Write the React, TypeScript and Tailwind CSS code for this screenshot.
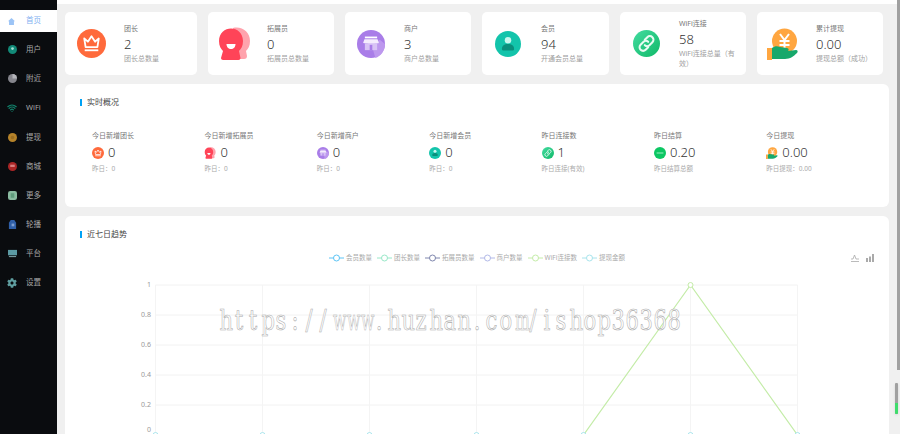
import React from 'react';
import { Wifi } from 'lucide-react';
import { FaCog } from 'react-icons/fa';

const Crown = ({ className }: { className: string }) => (
  <svg viewBox="0 0 32 32" className={className}>
    <circle cx="16" cy="16" r="16" fill="#ff6a3c" />
    <path d="M8 10.500l4 3.500 4-6 4 6 4-3.500-1.500 9.500h-13z" fill="none" stroke="#fff" strokeWidth="2" strokeLinejoin="round" />
    <rect x="8.500" y="22.500" width="15" height="2" fill="#fff" />
  </svg>
);

const Robot = ({ className }: { className: string }) => (
  <svg viewBox="0 0 34 34" className={className}>
    <path d="M16 1c9-2 17 4 17 13 0 5-2 8-4 10l1 5c0 2-1 3-3 3H16z" fill="#ffa3ad" />
    <path d="M2 14C2 6 8 1.500 14 1.500S26 6 26 14c0 5-2 8-4 10l1.500 7c0 1-1 2-2 2H6c-1 0-2-1-2-2l2-7c-2-2-4-5-4-10z" fill="#ff4458" />
    <path d="M9.500 17h9c0 3-2 5-4.500 5s-4.500-2-4.500-5z" fill="#fff" />
  </svg>
);

const Shop = ({ className }: { className: string }) => (
  <svg viewBox="0 0 32 32" className={className}>
    <circle cx="16" cy="16" r="16" fill="#a97de8" />
    <path d="M21 32l-4-14 9-7 6 5c0 8-5 14-11 16z" fill="#bd98ee" />
    <rect x="9" y="7.500" width="14" height="2" fill="#fff" />
    <path d="M8.500 10.500h15l1.500 4c0 1.500-17 1.500-18 0z" fill="#f4ecfd" />
    <rect x="9" y="15.500" width="14" height="7.500" fill="#d8c3f5" />
    <rect x="14.500" y="17" width="3" height="6" fill="#a97de8" />
  </svg>
);

const Member = ({ className }: { className: string }) => (
  <svg viewBox="0 0 32 32" className={className}>
    <circle cx="16" cy="16" r="16" fill="#13c4ab" />
    <circle cx="16" cy="11.500" r="4" fill="#c8f6ee" />
    <path d="M8.500 22c0-4 3-6 7.500-6s7.500 2 7.500 6c0 1.500-1 2-2 2h-11c-1 0-2-.500-2-2z" fill="#0a8f7c" />
  </svg>
);

const Chain = ({ className }: { className: string }) => (
  <svg viewBox="0 0 32 32" className={className}>
    <defs>
      <linearGradient id="chainFill" x1="0" y1="0" x2="1" y2="1">
        <stop offset="0" stopColor="#43dba0" />
        <stop offset="1" stopColor="#10b968" />
      </linearGradient>
    </defs>
    <circle cx="16" cy="16" r="16" fill="url(#chainFill)" />
    <g fill="none" stroke="#e8fbf2" strokeWidth="2.400" strokeLinecap="round">
      <path d="M14 11.500l3-3a4 4 0 0 1 6 6l-3.500 3.500a4 4 0 0 1-5.500 0" />
      <path d="M18 20.500l-3 3a4 4 0 0 1-6-6l3.500-3.500a4 4 0 0 1 5.500 0" />
    </g>
  </svg>
);

const Coin = ({ className }: { className: string }) => (
  <svg viewBox="0 0 32 32" className={className}>
    <circle cx="17.500" cy="13" r="12.500" fill="#ffa640" />
    <path d="M13 6l4.500 6 4.500-6M12.500 13h10M12.500 17h10M17.500 12v9" fill="none" stroke="#fff" strokeWidth="2" />
    <rect x="0" y="20" width="5" height="12" fill="#ffa640" />
    <path d="M5 20c3-2 5-2 8-1l7 1c2 .500 2 2 1 3l8-1c2 0 2 2 1 3-3 3-7 6-12 6H5z" fill="#17a86b" />
  </svg>
);

const Settle = ({ className }: { className: string }) => (
  <svg viewBox="0 0 32 32" className={className}>
    <circle cx="16" cy="16" r="16" fill="#0cc763" />
    <rect x="7" y="14.500" width="18" height="3" fill="#8fe8b8" />
  </svg>
);

const navItems = [
  {
    label: '用户',
    icon: (
      <svg viewBox="0 0 10 10" className="w-[9px] h-[9px]">
        <circle cx="5" cy="5" r="5" fill="#128a78" />
        <circle cx="5" cy="4" r="1.500" fill="#a6e0d4" />
      </svg>
    ),
  },
  {
    label: '附近',
    icon: (
      <svg viewBox="0 0 10 10" className="w-[9px] h-[9px]">
        <circle cx="5" cy="5" r="5" fill="#85858c" />
        <path d="M5 5V0a5 5 0 0 1 5 5z" fill="#b5b5ba" />
      </svg>
    ),
  },
  { label: 'WiFi', icon: <Wifi className="w-[10px] h-[10px] text-[#12806a]" strokeWidth={3} /> },
  {
    label: '提现',
    icon: (
      <svg viewBox="0 0 10 10" className="w-[9px] h-[9px]">
        <circle cx="5" cy="5" r="5" fill="#b5832a" />
        <circle cx="5" cy="5" r="2" fill="#9c6f22" />
      </svg>
    ),
  },
  {
    label: '商城',
    icon: (
      <svg viewBox="0 0 10 10" className="w-[9px] h-[9px]">
        <circle cx="5" cy="5" r="5" fill="#ab2626" />
        <rect x="2.500" y="3" width="5" height="2.500" fill="#d88080" />
      </svg>
    ),
  },
  {
    label: '更多',
    icon: (
      <svg viewBox="0 0 10 10" className="w-[9px] h-[9px]">
        <rect width="10" height="10" rx="2.500" fill="#8abba0" />
        <rect x="3" y="2.500" width="4" height="5" fill="#5f9c7c" />
      </svg>
    ),
  },
  {
    label: '轮播',
    icon: (
      <svg viewBox="0 0 10 10" className="w-[9px] h-[9px]">
        <path d="M1 3l2-3h4l2 3v7H1z" fill="#2f5fa8" />
        <rect x="4" y="4" width="3" height="3" fill="#7e9ed0" />
      </svg>
    ),
  },
  {
    label: '平台',
    icon: (
      <svg viewBox="0 0 10 10" className="w-[9px] h-[9px]">
        <rect y="1" width="10" height="6" fill="#5b9aa3" />
        <rect x="1" y="8" width="8" height="1" fill="#8fb8bd" />
      </svg>
    ),
  },
  { label: '设置', icon: <FaCog className="w-[10px] h-[10px] text-[#5f9ea0]" /> },
];

const cards = [
  { Icon: Crown, size: 'w-[29px] h-[29px]', width: 'w-[132px]', title: '团长', value: '2', sub: '团长总数量' },
  { Icon: Robot, size: 'w-[34px] h-[34px]', width: 'w-[126px]', title: '拓展员', value: '0', sub: '拓展员总数量' },
  { Icon: Shop, size: 'w-[28px] h-[28px]', width: 'w-[126px]', title: '商户', value: '3', sub: '商户总数量' },
  { Icon: Member, size: 'w-[26px] h-[26px]', width: 'w-[127px]', title: '会员', value: '94', sub: '开通会员总量' },
  { Icon: Chain, size: 'w-[27px] h-[27px]', width: 'w-[126px]', title: 'WiFi连接', value: '58', sub: 'WiFi连接总量（有效）' },
  { Icon: Coin, size: 'w-[32px] h-[32px]', width: 'w-[126px]', title: '累计提现', value: '0.00', sub: '提现总额（成功）' },
];

const stats = [
  { Icon: Crown, label: '今日新增团长', value: '0', sub: '昨日：0' },
  { Icon: Robot, label: '今日新增拓展员', value: '0', sub: '昨日：0' },
  { Icon: Shop, label: '今日新增商户', value: '0', sub: '昨日：0' },
  { Icon: Member, label: '今日新增会员', value: '0', sub: '昨日：0' },
  { Icon: Chain, label: '昨日连接数', value: '1', sub: '昨日连接(有效)' },
  { Icon: Settle, label: '昨日结算', value: '0.20', sub: '昨日结算总额' },
  { Icon: Coin, label: '今日提现', value: '0.00', sub: '昨日提现：0.00' },
];

const legend = [
  { label: '会员数量', color: '#5cc4f5' },
  { label: '团长数量', color: '#98e8c8' },
  { label: '拓展员数量', color: '#7e86ad' },
  { label: '商户数量', color: '#b2b9e8' },
  { label: 'WiFi连接数', color: '#c4eca8' },
  { label: '提现金额', color: '#a8e4ec' },
];

const gridX = [155.5, 262.5, 369.5, 476.5, 583.5, 690.5, 797.5];
const gridY = [
  { y: 285, label: '1' },
  { y: 315, label: '0.8' },
  { y: 345, label: '0.6' },
  { y: 375, label: '0.4' },
  { y: 405, label: '0.2' },
  { y: 430, label: '0' },
];

const watermark = 'https://www.huzhan.com/ishop36368'.split('');

const SectionTitle = ({ children }: { children: React.ReactNode }) => (
  <div className="flex items-center gap-[5px] text-[8px] leading-[10px] text-[#444]">
    <span className="w-[2px] h-[7px] bg-[#00a2f5]" />
    {children}
  </div>
);

const App = () => {
  return (
    <div className="relative flex w-[900px] h-[434px] overflow-hidden bg-[#f0f0f0] font-['Noto_Sans','Noto_Sans_CJK_SC',sans-serif]">
      <aside className="w-[57px] shrink-0 bg-[#0a0c0f] pt-[10px]">
        <div className="flex items-center h-[22px] bg-white pl-[8px] gap-[11px] text-[7.5px] text-[#7fb0f0]">
          <svg viewBox="0 0 10 10" className="w-[7px] h-[7px]">
            <path d="M5 0l5 4.500H8.500V10h-7V4.500H0z" fill="#9cc4f6" />
          </svg>
          首页
        </div>
        <div className="mt-[3px]">
          {navItems.map((item) => (
            <div key={item.label} className="flex items-center h-[29.2px] pl-[7px] text-[7.5px] text-[#a8a8a8]">
              <span className="flex items-center justify-center w-[10px] mr-[9px]">{item.icon}</span>
              {item.label}
            </div>
          ))}
        </div>
      </aside>

      <main className="flex-1 min-w-0">
        <div className="h-[4px] bg-white mr-[3px]" />
        <div className="pl-[8px] pt-[8px]">
          <div className="flex gap-[11px]">
            {cards.map((card) => (
              <div key={card.title} className={`${card.width} h-[63px] shrink-0 flex items-center rounded-[5px] bg-white`}>
                <div className="w-[52px] mr-[7px] shrink-0 flex items-center justify-center">
                  <card.Icon className={card.size} />
                </div>
                <div className="min-w-0 pr-[8px]">
                  <div className="text-[7px] leading-[10px] text-[#777]">{card.title}</div>
                  <div className="text-[13px] leading-[18px] my-[1px] font-light text-[#333]">{card.value}</div>
                  <div className="text-[7px] leading-[10px] text-[#a0a0a0]">{card.sub}</div>
                </div>
              </div>
            ))}
          </div>

          <section className="w-[824px] h-[123px] mt-[9px] rounded-[6px] bg-white pl-[15px] pt-[13px]">
            <SectionTitle>实时概况</SectionTitle>
            <div className="grid grid-cols-[repeat(7,112.4px)] mt-[24px] pl-[12px]">
              {stats.map((stat) => (
                <div key={stat.label}>
                  <div className="text-[7px] leading-[10px] text-[#777]">{stat.label}</div>
                  <div className="flex items-center h-[14px] mt-[5px] gap-[4px] text-[13px] font-light text-[#333]">
                    <stat.Icon className="w-[12px] h-[12px]" />
                    {stat.value}
                  </div>
                  <div className="text-[6.5px] leading-[9px] mt-[4px] text-[#aaa]">{stat.sub}</div>
                </div>
              ))}
            </div>
          </section>

          <section className="relative w-[824px] h-[240px] mt-[9px] rounded-[6px] bg-white pt-[13px]">
            <div className="pl-[15px]">
              <SectionTitle>近七日趋势</SectionTitle>
            </div>
            <div className="flex justify-center gap-[5px] mt-[14px] text-[6.5px] leading-[10px] text-[#aaa]">
              {legend.map((item) => (
                <div key={item.label} className="flex items-center gap-[2px]">
                  <svg viewBox="0 0 15 8" className="w-[15px] h-[8px]">
                    <path d="M0 4h15" stroke={item.color} strokeWidth="1" />
                    <circle cx="7.5" cy="4" r="3" fill="#fff" stroke={item.color} strokeWidth="1" />
                  </svg>
                  {item.label}
                </div>
              ))}
            </div>
            <div className="absolute right-[15px] top-[38px] flex gap-[7px]">
              <svg viewBox="0 0 8 8" className="w-[8px] h-[8px]">
                <path d="M0 5h2l1.500-4L5 5h3M0 7.500h8" fill="none" stroke="#aaa" strokeWidth="0.8" />
              </svg>
              <svg viewBox="0 0 8 8" className="w-[8px] h-[8px]">
                <path d="M0 4h2v4H0zM3 2.500h2V8H3zM6 0h2v8H6z" fill="#aaa" />
              </svg>
            </div>
            <svg viewBox="65 270 824 182" className="block w-[824px] h-[182px] mt-[7px]">
              {gridY.map((row) => (
                <g key={row.label}>
                  {row.label !== '0' && <line x1="155.5" x2="797.5" y1={row.y} y2={row.y} stroke="#f2f2f2" />}
                  <text x="151" y={row.y + 2} textAnchor="end" fontSize="7" fill="#999">
                    {row.label}
                  </text>
                </g>
              ))}
              {gridX.map((x) => (
                <line key={x} x1={x} x2={x} y1="285" y2="435" stroke="#f4f4f4" />
              ))}
              <path d="M583.5 435L690.5 285L797.5 435" fill="none" stroke="#c4eca8" strokeWidth="1.2" />
              <circle cx="690.5" cy="285" r="2.5" fill="#fff" stroke="#c4eca8" />
              {gridX.map((x) => (
                <circle key={x} cx={x} cy="435" r="2.5" fill="#fff" stroke="#a8e4ec" />
              ))}
            </svg>
          </section>
        </div>
      </main>

      <div className="absolute right-0 top-0 w-[3px] h-[370px] bg-[#a0a0a0]" />
      <div className="absolute right-[2px] top-[383px] w-[3px] h-[31px] overflow-hidden rounded-[1px] bg-[#a0a0a0] shadow-sm">
        <div className="mt-[20px] h-[11px] bg-[#3fdc6c]" />
      </div>

      <div className="absolute left-[218px] top-[304px] flex font-['DejaVu_Serif',serif] text-[27px] leading-[34px] whitespace-nowrap text-white/80 [-webkit-text-stroke:0.6px_#aaaaaa]">
        {watermark.map((ch, i) => (
          <span key={i} className={`inline-block w-[14px] text-center ${ch === 'w' || ch === 'm' ? 'scale-x-[.58]' : 'scale-x-[.78]'}`}>
            {ch}
          </span>
        ))}
      </div>
    </div>
  );
};

export default App;
